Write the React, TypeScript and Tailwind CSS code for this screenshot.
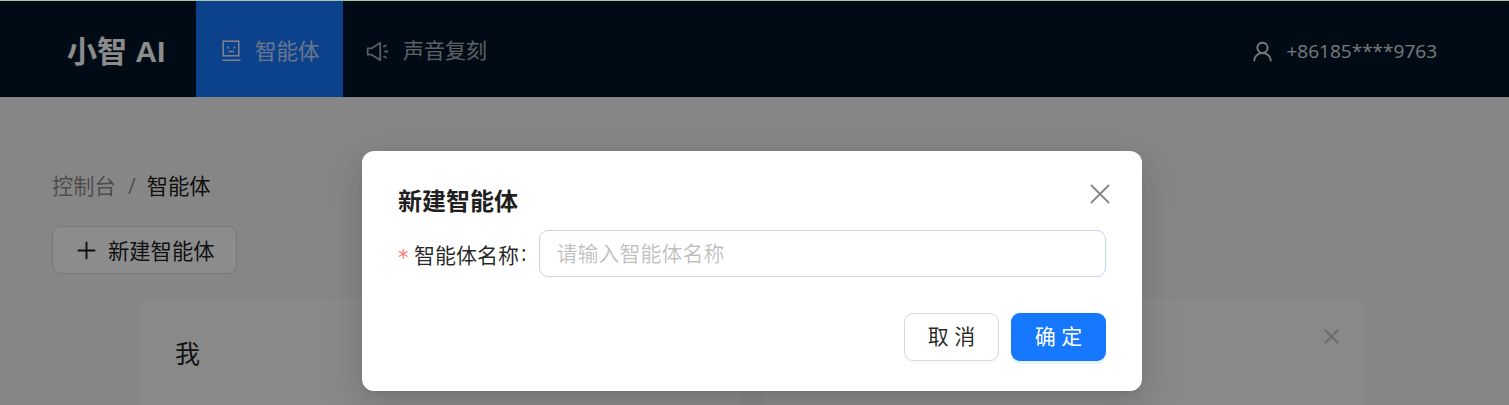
import { AiOutlinePlus, AiOutlineSound, AiOutlineUser } from "react-icons/ai";

const cjk = { fontFamily: '"Open Sans", "Noto Sans CJK SC", sans-serif' };

function AgentIcon() {
  return (
    <svg width="19" height="22" viewBox="0 0 19 22" fill="none" stroke="currentColor" strokeWidth="1.5">
      <rect x="1.2" y="1.2" width="15.6" height="14.6" />
      <path d="M6 6.5v2M12.5 6.5v2M6.5 11.5h5.5M0.5 20.2h18" />
    </svg>
  );
}

function CloseIcon({ className, weight = 2 }: { className: string; weight?: number }) {
  return (
    <svg className={className} viewBox="0 0 20 20" fill="none" stroke="currentColor" strokeWidth={weight}>
      <path d="M1 1l18 18M19 1L1 19" />
    </svg>
  );
}

function AgentCard({ name }: { name?: string }) {
  return (
    <div className="flex-1 h-[200px] bg-[#fafafa] rounded-[12px] shadow-[0_1px_6px_rgba(0,0,0,0.02)] pl-[35px] pr-[24px] pt-[37px] flex justify-between">
      <span className="text-[25px] leading-[36px] text-[#1f1f1f]">{name}</span>
      <CloseIcon className="w-[15px] h-[15px] text-[#c6c6c6] mt-[-6px] mr-[1px]" weight={3} />
    </div>
  );
}

export default function App() {
  return (
    <div className="relative w-[1509px] h-[405px] overflow-hidden bg-[#f5f5f5]" style={cjk}>
      <div className="h-px bg-[#a5c4a8]" />
      {/* Header */}
      <header className="h-[96px] bg-[#001529] flex items-center pl-[67px] pr-[72px] text-white/65">
        <div className="w-[129px] pt-[5px] text-[30px] font-bold text-white" style={{ fontFamily: '"Liberation Sans", "Noto Sans CJK SC", sans-serif' }}>
          小智 AI
        </div>
        <nav className="flex h-full text-[21px]">
          <div className="w-[147px] bg-[#1677ff] text-white/90 flex items-center pt-[4px] pl-[26px] gap-[14px]">
            <AgentIcon />
            <span className="opacity-80 text-[21.5px]">智能体</span>
          </div>
          <div className="flex items-center pt-[4px] pl-[22px] gap-[13px] text-white/65">
            <AiOutlineSound className="w-[25px] h-[25px]" />
            <span>声音复刻</span>
          </div>
        </nav>
        <div className="ml-auto flex items-center pt-[4px] gap-[12px] text-[19px] text-white/85">
          <AiOutlineUser className="w-[25px] h-[25px]" />
          <span>+86185****9763</span>
        </div>
      </header>

      {/* Page content */}
      <main className="pt-[71px] px-[52px]">
        <div className="flex items-center text-[21.3px] leading-[36px] text-black/45">
          <span>控制台</span>
          <span className="ml-[12px] mr-[11px]">/</span>
          <span className="text-black/90">智能体</span>
        </div>
        <button className="mt-[22px] h-[48px] w-[185px] flex items-center pl-[21px] gap-[9px] bg-white border border-[#d9d9d9] rounded-[9px] text-[21.3px] text-black/90">
          <AiOutlinePlus className="w-[25px] h-[25px]" />
          <span className="pt-[2px]">新建智能体</span>
        </button>
        <div className="mt-[24px] ml-[88px] mr-[93px] flex gap-[24px]">
          <AgentCard name="我" />
          <AgentCard />
        </div>
      </main>

      {/* Mask */}
      <div className="absolute inset-x-0 top-px bottom-0 bg-black/45" />

      {/* Modal */}
      <div className="absolute left-[362px] top-[151px] w-[780px] h-[240px] bg-white rounded-[12px] shadow-[0_9px_24px_rgba(0,0,0,0.08),0_5px_9px_-6px_rgba(0,0,0,0.12),0_14px_42px_12px_rgba(0,0,0,0.05)] px-[36px] pt-[31px] flex flex-col">
        <CloseIcon className="absolute right-[32px] top-[33px] w-[20px] h-[20px] text-[#8a8a8a]" />
        <h2 className="text-[24px] leading-[36px] font-semibold text-[#1f1f1f]" style={{ fontFamily: '"Noto Sans CJK SC", sans-serif' }}>
          新建智能体
        </h2>
        <div className="mt-[12px] flex items-start h-[48px]">
          <span className="text-[#ff7375] text-[21px] mt-[18px] mr-[5px] w-[11px] leading-none" style={{ fontFamily: '"DejaVu Sans", sans-serif' }}>*</span>
          <span className="text-[21px] leading-[47px] pt-[2px] text-black/85">智能体名称</span>
          <span className="text-[21px] leading-[47px] text-black/85 ml-[2px]">:</span>
          <div className="ml-[12px] flex-1 h-[47px] border border-[#c8d4e0] rounded-[9px] flex items-center pl-[17px] pt-[1px] text-[21px] text-black/25">
            请输入智能体名称
          </div>
        </div>
        <div className="mt-auto mb-[30px] flex justify-end gap-[12px]">
          <button className="w-[95px] h-[48px] bg-white border border-[#d9d9d9] rounded-[9px] text-[21px] text-black/85 shadow-[0_3px_0_rgba(0,0,0,0.02)]">
            取 消
          </button>
          <button className="w-[95px] h-[48px] bg-[#1677ff] rounded-[9px] text-[21px] text-white shadow-[0_3px_0_rgba(5,145,255,0.1)]">
            确 定
          </button>
        </div>
      </div>
    </div>
  );
}
